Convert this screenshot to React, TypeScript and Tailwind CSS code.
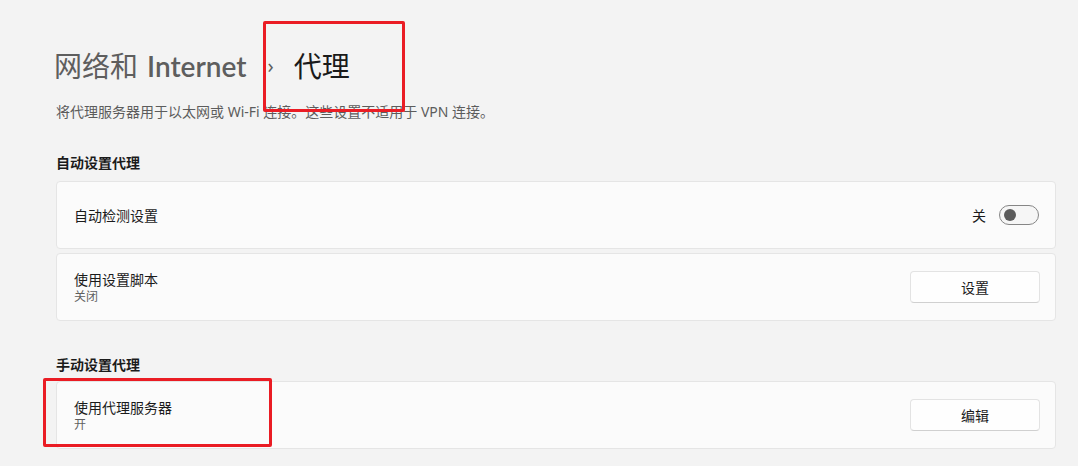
const font = "font-['Segoe_UI','Noto_Sans','Noto_Sans_CJK_SC',sans-serif]";

const Toggle = () => (
  <div className="flex items-center gap-[13px] mr-px">
    <span className="text-[14px] text-[#1b1b1b]">关</span>
    <div className="w-[40px] h-[20px] rounded-full border border-[#868686] bg-[#f6f6f6] flex items-center pl-[4px]">
      <div className="w-[12px] h-[12px] rounded-full bg-[#5c5c5c]" />
    </div>
  </div>
);

const Btn = ({ label }: { label: string }) => (
  <button className="w-[130px] h-[32px] rounded-[4px] bg-[#fefefe] border border-[#e3e3e3] border-b-[#d0d0d0] text-[14px] text-[#1b1b1b]">
    {label}
  </button>
);

const Card = ({
  title,
  sub,
  right,
}: {
  title: string;
  sub?: string;
  right: React.ReactNode;
}) => (
  <div className="h-[68px] flex items-center justify-between rounded-[4px] bg-[#fbfbfb] border border-[#e5e5e5] pl-[17px] pr-[15px]">
    <div className="flex flex-col">
      <span className="text-[14px] leading-[19px] text-[#1b1b1b]">{title}</span>
      {sub && <span className="text-[12px] leading-[16px] text-[#5f5f5f]">{sub}</span>}
    </div>
    {right}
  </div>
);

export default function App() {
  return (
    <div className={`relative w-[1078px] h-[466px] overflow-hidden bg-[#f3f3f3] ${font}`}>
      <div className="flex flex-col pl-[56px] pr-[22px] pt-[46px]">
        {/* Breadcrumb title */}
        <div className="h-[40px] flex items-center -ml-[2px]">
          <span className="text-[28px] text-[#5e5e5e]">网络和</span>
          <span className="text-[28px] text-[#5e5e5e] font-semibold font-['Lato',sans-serif] ml-[9px]">Internet</span>
          <span className="text-[20px] text-[#5e5e5e] ml-[21px] mr-[20px]">›</span>
          <span className="text-[28px] text-[#1a1a1a]">代理</span>
        </div>

        <p className="mt-[16px] text-[14px] leading-[20px] text-[#5c5c5c]">
          将代理服务器用于以太网或 Wi-Fi 连接。这些设置不适用于 VPN 连接。
        </p>

        <h2 className="mt-[31px] text-[14px] leading-[20px] font-semibold text-[#1b1b1b]">自动设置代理</h2>
        <div className="mt-[8px] flex flex-col gap-[4px]">
          <Card title="自动检测设置" right={<Toggle />} />
          <Card title="使用设置脚本" sub="关闭" right={<Btn label="设置" />} />
        </div>

        <h2 className="mt-[34px] text-[14px] leading-[20px] font-semibold text-[#1b1b1b]">手动设置代理</h2>
        <div className="mt-[6px] flex flex-col gap-[4px]">
          <Card title="使用代理服务器" sub="开" right={<Btn label="编辑" />} />
        </div>
      </div>

      {/* annotation boxes */}
      <div className="absolute left-[263px] top-[21px] w-[142px] h-[91px] border-[3px] border-[#ea1c24] rounded-[2px]" />
      <div className="absolute left-[43px] top-[378px] w-[229px] h-[69px] border-[3px] border-[#ea1c24] rounded-[2px]" />
    </div>
  );
}
